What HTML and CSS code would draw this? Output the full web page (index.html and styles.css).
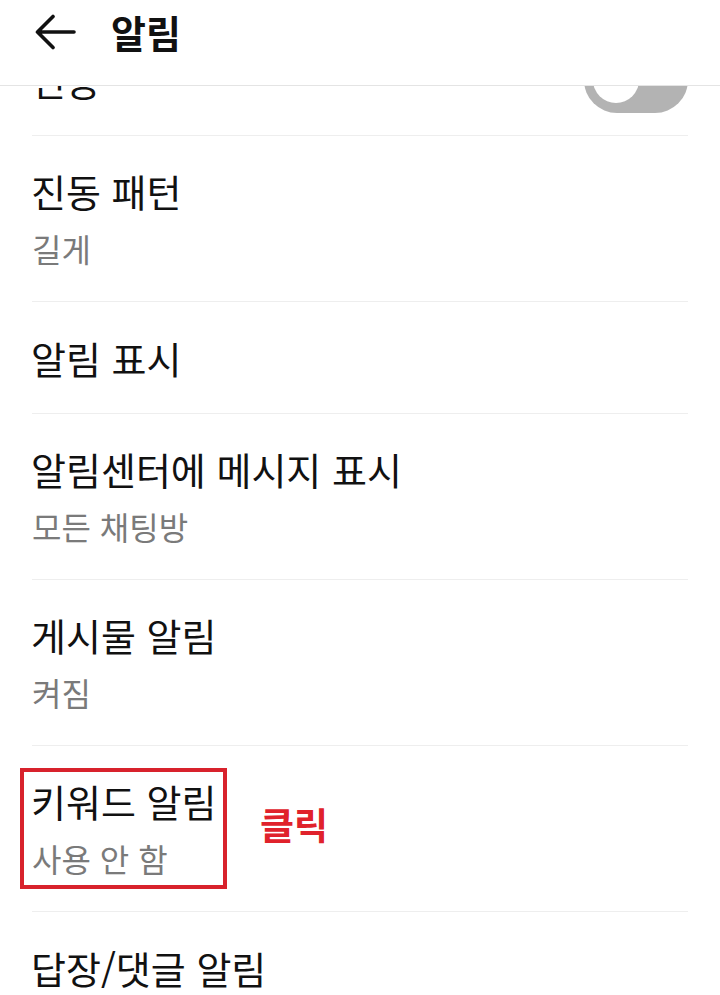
FILE: index.html
```html
<!DOCTYPE html>
<html lang="ko">
<head>
<meta charset="utf-8">
<title>알림</title>
<link rel="stylesheet" href="styles.css">
</head>
<body>
<header class="appbar">
  <button class="back" aria-label="뒤로">
    <svg viewBox="0 0 44 40" width="44" height="40" aria-hidden="true">
      <path d="M40 18 H4 M19 2.5 L3.5 18 L19 33.5" fill="none" stroke="#111" stroke-width="3.6" stroke-linecap="round" stroke-linejoin="round"/>
    </svg>
  </button>
  <h1 class="appbar-title">알림</h1>
</header>
<main class="viewport">
  <ul class="list">
    <li class="row row-single">
      <span class="title">진동</span>
      <span class="toggle"><span class="knob"></span></span>
    </li>
    <li class="row row-double">
      <span class="title">진동 패턴</span>
      <span class="sub">길게</span>
    </li>
    <li class="row row-single">
      <span class="title">알림 표시</span>
    </li>
    <li class="row row-double">
      <span class="title">알림센터에 메시지 표시</span>
      <span class="sub">모든 채팅방</span>
    </li>
    <li class="row row-double">
      <span class="title">게시물 알림</span>
      <span class="sub">켜짐</span>
    </li>
    <li class="row row-double row-marked">
      <span class="title">키워드 알림</span>
      <span class="sub">사용 안 함</span>
      <span class="mark-box"></span>
      <span class="mark-label">클릭</span>
    </li>
    <li class="row row-single">
      <span class="title">답장/댓글 알림</span>
    </li>
  </ul>
</main>
</body>
</html>
```
FILE: styles.css
```css
* { box-sizing: border-box; }
html, body {
  margin: 0;
  padding: 0;
  background: #fff;
}
body {
  width: 720px;
  height: 995px;
  overflow: hidden;
  font-family: "Noto Sans CJK KR", "Noto Sans", sans-serif;
  color: #111;
}
.appbar {
  position: relative;
  z-index: 2;
  height: 86px;
  background: #fff;
  border-bottom: 1px solid #e4e4e4;
  display: flex;
  align-items: center;
  padding-left: 34px;
  padding-bottom: 16px;
}
.back {
  border: 0;
  background: none;
  padding: 0;
  width: 44px;
  height: 40px;
  display: flex;
  margin-top: -2px;
}
.appbar-title {
  margin: 0 0 0 33px;
  font-size: 38px;
  font-weight: 700;
  line-height: 40px;
  margin-top: -6px;
}
.viewport {
  height: 909px;
  overflow: hidden;
}
.list {
  list-style: none;
  margin: -62px 32px 0;
  padding: 0;
}
.row {
  position: relative;
  display: flex;
  flex-direction: column;
  justify-content: center;
  border-bottom: 1px solid #eeeeee;
}
.row-single { height: 112px; }
.row-double { height: 166px; }
.title {
  font-size: 38px;
  line-height: 60px;
  color: #111;
  margin-left: -1px;
}
.sub {
  font-size: 32px;
  line-height: 55px;
  color: #7a7a7a;
}
.toggle {
  position: absolute;
  right: 0;
  top: 23px;
  width: 104px;
  height: 66px;
  border-radius: 33px;
  background: #b3b3b3;
}
.knob {
  position: absolute;
  left: 9px;
  top: 10px;
  width: 46px;
  height: 46px;
  border-radius: 50%;
  background: #fff;
}
.mark-box {
  position: absolute;
  left: -12px;
  top: 22px;
  width: 207px;
  height: 121px;
  border: 4px solid #d8222c;
}
.mark-label {
  position: absolute;
  left: 228px;
  top: 58px;
  font-size: 37px;
  font-weight: 700;
  line-height: 40px;
  color: #e0222b;
}
```
